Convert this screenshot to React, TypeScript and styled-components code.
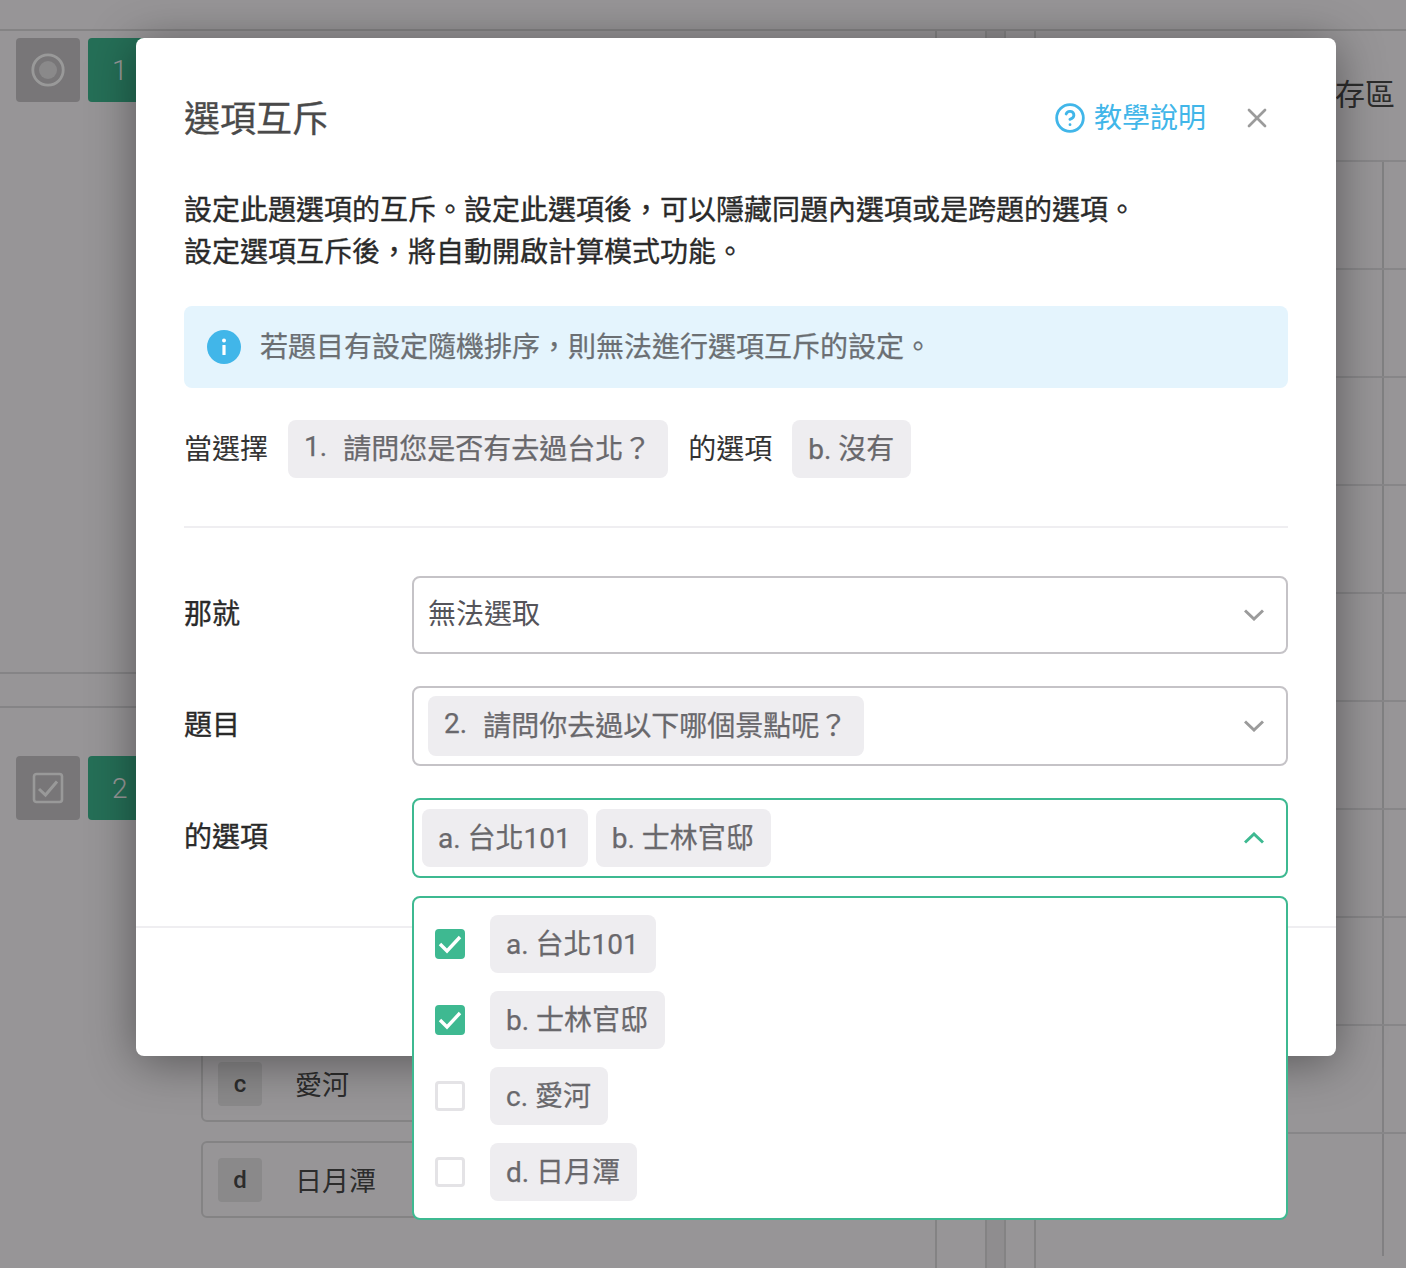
import styled, { createGlobalStyle } from 'styled-components';
import { CircleHelp, X } from 'lucide-react';

const GlobalStyle = createGlobalStyle`
  html, body {
    margin: 0;
    padding: 0;
    font-family: Roboto, "Noto Sans CJK TC", sans-serif;
  }
  * {
    box-sizing: border-box;
  }
`;

const GREEN = '#3eb991';

const Page = styled.div`
  position: relative;
  width: 1406px;
  height: 1268px;
  overflow: hidden;
  background: #fcf9fc;
`;

const TopBar = styled.header`
  height: 31px;
  border-bottom: 2px solid #dcdadd;
`;

const Workspace = styled.div`
  display: flex;
  height: 1237px;
`;

const Editor = styled.main`
  width: 937px;
  flex: none;
  padding: 7px 16px 0;
  border-right: 2px solid #dcdadd;
`;

const Gutter = styled.div`
  width: 50px;
  flex: none;
  border-right: 2px solid #dcdadd;
`;

const ScrollTrack = styled.div`
  width: 19px;
  flex: none;
  border-right: 2px solid #dcdadd;
  background: #eeecef;
`;

const SidePanel = styled.aside`
  flex: 1;
  margin-left: 28px;
  border-left: 2px solid #dcdadd;
`;

const SideTitle = styled.div`
  height: 129px;
  padding: 46px 11px 0 0;
  text-align: right;
  font-size: 30px;
  line-height: 36px;
  color: #4a4a4a;
`;

const SideRow = styled.div<{ $last?: boolean }>`
  display: flex;
  justify-content: flex-end;
  height: ${(p) => (p.$last ? 122 : 108)}px;
  border-bottom: ${(p) => (p.$last ? 'none' : '2px solid #e2e0e3')};
`;

const SideCell = styled.div`
  width: 24px;
  border-left: 2px solid #d8d6d9;
`;

const SideGrid = styled.div`
  border-top: 2px solid #e2e0e3;
`;

const QuestionHead = styled.div`
  display: flex;
  gap: 8px;
`;

const TypeTile = styled.div`
  display: flex;
  align-items: center;
  justify-content: center;
  width: 64px;
  height: 64px;
  border-radius: 4px;
  background: #c8c5c8;
  color: #fff;
`;

const NumberTile = styled.div`
  display: flex;
  align-items: center;
  width: 110px;
  height: 64px;
  padding-left: 24px;
  border-radius: 4px;
  background: ${GREEN};
  color: #fff;
  font-size: 28px;
  font-weight: 300;
`;

const AddBand = styled.div`
  height: 36px;
  margin: 570px -16px 48px;
  border-top: 2px solid #dedcdf;
  border-bottom: 2px solid #dedcdf;
`;

const OptionList = styled.div`
  display: flex;
  flex-direction: column;
  gap: 19px;
  margin: 33px 0 0 185px;
`;

const OptionBox = styled.div`
  display: flex;
  align-items: center;
  height: 77px;
  padding-left: 15px;
  border: 2px solid #dcdadd;
  border-radius: 6px;
  font-size: 27px;
  color: #4a4a4a;
`;

const OptionBadge = styled.span`
  display: flex;
  align-items: center;
  justify-content: center;
  width: 44px;
  height: 44px;
  margin-right: 33px;
  border-radius: 4px;
  background: #e6e4e7;
  font-size: 24px;
  font-weight: 500;
`;

const Overlay = styled.div`
  position: absolute;
  inset: 0;
  padding: 38px 0 0 136px;
  background: rgba(0, 0, 0, 0.4);
`;

const Modal = styled.section`
  width: 1200px;
  height: 1018px;
  padding-top: 56px;
  border-radius: 8px;
  background: #fff;
  box-shadow: 0 6px 48px rgba(0, 0, 0, 0.42);
`;

const ModalHead = styled.div`
  display: flex;
  align-items: center;
  height: 48px;
  padding: 0 63px 0 48px;
`;

const ModalTitle = styled.h2`
  flex: 1;
  margin: 0;
  padding-bottom: 4px;
  font-size: 36px;
  font-weight: 400;
  -webkit-text-stroke: 0.3px currentColor;
  color: #4a4a4a;
`;

const HelpLink = styled.a`
  display: flex;
  align-items: center;
  gap: 8px;
  margin-right: 35px;
  font-size: 28px;
  color: #41b6e9;
`;

const HelpText = styled.span`
  padding-bottom: 4px;
`;

const CloseButton = styled.button`
  display: flex;
  padding: 0;
  border: 0;
  background: none;
  color: #9b9b9b;
`;

const ModalBody = styled.div`
  padding: 48px 48px 0;
`;

const Description = styled.p`
  margin: 0 0 32px;
  font-size: 28px;
  line-height: 42px;
  -webkit-text-stroke: 0.35px currentColor;
  color: #2a2a2a;
`;

const InfoBox = styled.div`
  display: flex;
  align-items: center;
  gap: 19px;
  height: 82px;
  padding-left: 23px;
  border-radius: 8px;
  background: #e4f4fd;
  font-size: 28px;
  color: #6b6f73;
`;

const InfoText = styled.span`
  padding-bottom: 5px;
  -webkit-text-stroke: 0.25px currentColor;
`;

const ConditionRow = styled.div`
  display: flex;
  align-items: center;
  margin-top: 32px;
  font-size: 28px;
  color: #333;
`;

const ConditionWord = styled.span<{ $left?: number }>`
  margin: 0 20px 0 ${(p) => p.$left ?? 0}px;
  padding-bottom: 4px;
`;

const Chip = styled.span`
  display: inline-flex;
  align-items: center;
  height: 58px;
  padding: 0 17px 5px 16px;
  border-radius: 8px;
  background: #eeedf0;
  font-size: 28px;
  -webkit-text-stroke: 0.25px currentColor;
  color: #69686c;
  white-space: nowrap;
`;

const QuestionNumber = styled.span`
  margin-right: 16px;
`;

const Separator = styled.hr`
  height: 2px;
  margin: 48px 0;
  border: 0;
  background: #efeef1;
`;

const Fields = styled.div`
  display: flex;
  flex-direction: column;
  gap: 32px;
`;

const Field = styled.div`
  display: grid;
  grid-template-columns: 228px 1fr;
  align-items: center;
`;

const FieldLabel = styled.label`
  padding-bottom: 6px;
  font-size: 28px;
  -webkit-text-stroke: 0.35px currentColor;
  color: #2a2a2a;
`;

const SelectWrap = styled.div`
  position: relative;
`;

const Select = styled.div<{ $open?: boolean; $height: number; $inset: number }>`
  display: flex;
  align-items: center;
  gap: 8px;
  height: ${(p) => p.$height}px;
  padding: 0 22px 0 ${(p) => p.$inset}px;
  border: 2px solid ${(p) => (p.$open ? GREEN : '#c5c3c7')};
  border-radius: 8px;
  background: #fff;
  font-size: 28px;
  color: #55545a;
`;

const SelectValue = styled.div`
  display: flex;
  flex: 1;
  gap: 8px;
  align-items: center;
`;

const PlainValue = styled.span`
  padding-bottom: 6px;
`;

const TallChip = styled(Chip)`
  height: 60px;
`;

const Dropdown = styled.div`
  position: absolute;
  top: 98px;
  left: 0;
  right: 0;
  display: flex;
  flex-direction: column;
  gap: 18px;
  padding: 17px 21px;
  border: 2px solid ${GREEN};
  border-radius: 8px;
  background: #fff;
`;

const DropdownItem = styled.div`
  display: flex;
  align-items: center;
  gap: 25px;
`;

const CheckMark = styled.span<{ $checked?: boolean }>`
  display: flex;
  align-items: center;
  justify-content: center;
  width: 30px;
  height: 30px;
  border-radius: 4px;
  border: 3px solid ${(p) => (p.$checked ? GREEN : '#e4e3e6')};
  background: ${(p) => (p.$checked ? GREEN : '#fff')};
`;

const ModalFoot = styled.div`
  margin-top: 48px;
  height: 129px;
  border-top: 2px solid #efeef1;
`;

const Chevron = ({ up }: { up?: boolean }) => (
  <svg width="20" height="12" viewBox="0 0 20 12" fill="none">
    <path
      d={up ? 'M1 10.5 L10 2 L19 10.5' : 'M1 1.5 L10 10 L19 1.5'}
      stroke={up ? GREEN : '#9b9b9b'}
      strokeWidth="3"
    />
  </svg>
);

const InfoIcon = () => (
  <svg width="34" height="34" viewBox="0 0 34 34">
    <circle cx="17" cy="17" r="17" fill="#41b6e9" />
    <circle cx="17" cy="10.5" r="2" fill="#fff" />
    <rect x="15.4" y="15" width="3.2" height="10" rx="0.6" fill="#fff" />
  </svg>
);

const RadioIcon = () => (
  <svg width="34" height="34" viewBox="0 0 34 34" fill="none">
    <circle cx="17" cy="17" r="15.2" stroke="currentColor" strokeWidth="2.8" />
    <circle cx="17" cy="17" r="9" fill="#e6e4e7" />
  </svg>
);

const CheckboxIcon = () => (
  <svg width="32" height="32" viewBox="0 0 32 32" fill="none">
    <rect x="2" y="2" width="28" height="28" rx="2.5" stroke="currentColor" strokeWidth="2.6" />
    <path d="M7 17 L13.5 23 L25 9.5" stroke="currentColor" strokeWidth="3" />
  </svg>
);

const TickIcon = () => (
  <svg width="24" height="20" viewBox="0 0 24 20" fill="none">
    <path d="M2 10 L9 17 L22 3" stroke="#fff" strokeWidth="3.4" />
  </svg>
);

const backgroundOptions = [
  { key: 'a', label: '台北101' },
  { key: 'b', label: '士林官邸' },
  { key: 'c', label: '愛河' },
  { key: 'd', label: '日月潭' },
];

const dropdownOptions = [
  { label: 'a. 台北101', checked: true },
  { label: 'b. 士林官邸', checked: true },
  { label: 'c. 愛河', checked: false },
  { label: 'd. 日月潭', checked: false },
];

export default function App() {
  return (
    <Page>
      <GlobalStyle />
      <TopBar />
      <Workspace>
        <Editor>
          <QuestionHead>
            <TypeTile>
              <RadioIcon />
            </TypeTile>
            <NumberTile>1</NumberTile>
          </QuestionHead>
          <AddBand />
          <QuestionHead>
            <TypeTile>
              <CheckboxIcon />
            </TypeTile>
            <NumberTile>2</NumberTile>
          </QuestionHead>
          <OptionList>
            {backgroundOptions.map((o) => (
              <OptionBox key={o.key}>
                <OptionBadge>{o.key}</OptionBadge>
                {o.label}
              </OptionBox>
            ))}
          </OptionList>
        </Editor>
        <Gutter />
        <ScrollTrack />
        <SidePanel>
          <SideTitle>暫存區</SideTitle>
          <SideGrid>
            {Array.from({ length: 9 }, (_, i) => (
              <SideRow key={i}>
                <SideCell />
              </SideRow>
            ))}
            <SideRow $last>
              <SideCell />
            </SideRow>
          </SideGrid>
        </SidePanel>
      </Workspace>
      <Overlay>
        <Modal>
          <ModalHead>
            <ModalTitle>選項互斥</ModalTitle>
            <HelpLink>
              <CircleHelp size={32} strokeWidth={2.1} />
              <HelpText>教學說明</HelpText>
            </HelpLink>
            <CloseButton>
              <X size={32} strokeWidth={2} />
            </CloseButton>
          </ModalHead>
          <ModalBody>
            <Description>
              設定此題選項的互斥。設定此選項後，可以隱藏同題內選項或是跨題的選項。
              <br />
              設定選項互斥後，將自動開啟計算模式功能。
            </Description>
            <InfoBox>
              <InfoIcon />
              <InfoText>若題目有設定隨機排序，則無法進行選項互斥的設定。</InfoText>
            </InfoBox>
            <ConditionRow>
              <ConditionWord>當選擇</ConditionWord>
              <Chip>
                <QuestionNumber>1.</QuestionNumber>請問您是否有去過台北？
              </Chip>
              <ConditionWord $left={20}>的選項</ConditionWord>
              <Chip>b. 沒有</Chip>
            </ConditionRow>
            <Separator />
            <Fields>
              <Field>
                <FieldLabel>那就</FieldLabel>
                <Select $height={78} $inset={14}>
                  <SelectValue>
                    <PlainValue>無法選取</PlainValue>
                  </SelectValue>
                  <Chevron />
                </Select>
              </Field>
              <Field>
                <FieldLabel>題目</FieldLabel>
                <Select $height={80} $inset={14}>
                  <SelectValue>
                    <TallChip>
                      <QuestionNumber>2.</QuestionNumber>請問你去過以下哪個景點呢？
                    </TallChip>
                  </SelectValue>
                  <Chevron />
                </Select>
              </Field>
              <Field>
                <FieldLabel>的選項</FieldLabel>
                <SelectWrap>
                  <Select $open $height={80} $inset={8}>
                    <SelectValue>
                      <Chip>a. 台北101</Chip>
                      <Chip>b. 士林官邸</Chip>
                    </SelectValue>
                    <Chevron up />
                  </Select>
                  <Dropdown>
                    {dropdownOptions.map((o) => (
                      <DropdownItem key={o.label}>
                        <CheckMark $checked={o.checked}>{o.checked && <TickIcon />}</CheckMark>
                        <Chip>{o.label}</Chip>
                      </DropdownItem>
                    ))}
                  </Dropdown>
                </SelectWrap>
              </Field>
            </Fields>
          </ModalBody>
          <ModalFoot />
        </Modal>
      </Overlay>
    </Page>
  );
}
